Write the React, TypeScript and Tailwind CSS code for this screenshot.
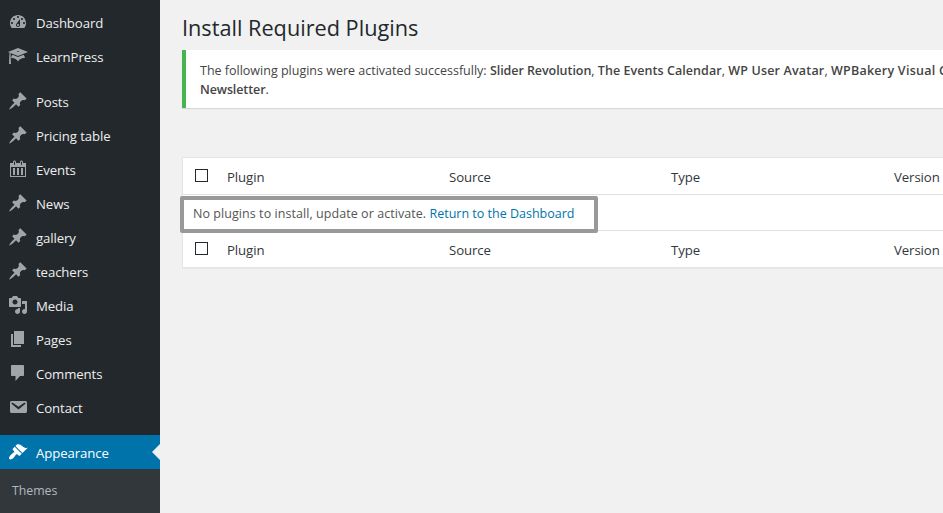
import type { ReactNode } from 'react';

const PIN =
  'M10.44 3.02l1.82-1.82 6.36 6.35-1.83 1.82c-1.05-.68-2.48-.57-3.41.36l-.75.75c-.92.93-1.04 2.35-.35 3.41l-1.83 1.82-2.41-2.41-2.8 2.79c-.42.42-3.38 2.71-3.8 2.29s1.86-3.39 2.28-3.81l2.79-2.79L4.1 9.36l1.83-1.82c1.05.69 2.48.57 3.4-.36l.75-.75c.93-.92 1.05-2.35.36-3.41z';
const DASHBOARD =
  'M3.76 16h12.48c1.1-1.37 1.76-3.11 1.76-5 0-4.42-3.58-8-8-8s-8 3.58-8 8c0 1.89.66 3.63 1.76 5zM10 4c.55 0 1 .45 1 1s-.45 1-1 1-1-.45-1-1 .45-1 1-1zM6 6c.55 0 1 .45 1 1s-.45 1-1 1-1-.45-1-1 .45-1 1-1zm8 0c.55 0 1 .45 1 1s-.45 1-1 1-1-.45-1-1 .45-1 1-1zm-5.37 5.55L12 7v6c0 1.1-.9 2-2 2s-2-.9-2-2c0-.57.24-1.08.63-1.45zM4 10c.55 0 1 .45 1 1s-.45 1-1 1-1-.45-1-1 .45-1 1-1zm12 0c.55 0 1 .45 1 1s-.45 1-1 1-1-.45-1-1 .45-1 1-1zm-5 3c0-.55-.45-1-1-1s-1 .45-1 1 .45 1 1 1 1-.45 1-1z';
const LEARN =
  'M10 10L2.54 7.02 3 18H1l.48-11.41L0 6l10-4 10 4zm0-5c-.55 0-1 .22-1 .5s.45.5 1 .5 1-.22 1-.5-.45-.5-1-.5zm0 6l5.57-2.23c.71.94 1.2 2.07 1.36 3.3-.3-.04-.61-.07-.93-.07-2.55 0-4.78 1.37-6 3.41C8.78 13.37 6.55 12 4 12c-.32 0-.63.03-.93.07.16-1.23.65-2.36 1.36-3.3z';
const CALENDAR =
  'M15 4h3v14H2V4h3V3c0-.83.67-1.5 1.5-1.5S8 2.17 8 3v1h4V3c0-.83.67-1.5 1.5-1.5S15 2.17 15 3v1zM6 3v2.5c0 .28.22.5.5.5s.5-.22.5-.5V3c0-.28-.22-.5-.5-.5S6 2.72 6 3zm7 0v2.5c0 .28.22.5.5.5s.5-.22.5-.5V3c0-.28-.22-.5-.5-.5s-.5.22-.5.5zm4 14V8H3v9h14zM7 16V9H5v7h2zm4 0V9H9v7h2zm4 0V9h-2v7h2z';
const MEDIA =
  'M13 11V4c0-.55-.45-1-1-1h-1.67L9 1H5L3.67 3H2c-.55 0-1 .45-1 1v7c0 .55.45 1 1 1h10c.55 0 1-.45 1-1zM7 4.5c1.38 0 2.5 1.12 2.5 2.5S8.38 9.5 7 9.5 4.5 8.38 4.5 7 5.62 4.5 7 4.5zM14 6h5v10.5c0 1.38-1.12 2.5-2.5 2.5S14 17.88 14 16.5s1.12-2.5 2.5-2.5c.17 0 .34.02.5.05V9h-3V6zm-4 8.05V13h2v3.5c0 1.38-1.12 2.5-2.5 2.5S7 17.88 7 16.5 8.12 14 9.5 14c.17 0 .34.02.5.05z';
const PAGES = 'M6 15V2h10v13H6zm-1 1h8v2H3V5h2v11z';
const COMMENTS =
  'M4 2h11c.55 0 1 .45 1 1v9c0 .55-.45 1-1 1h-3l-4.5 5v-5H4c-.55 0-1-.45-1-1V3c0-.55.45-1 1-1z';
const EMAIL =
  'M3.87 4h13.25C18.37 4 19 4.59 19 5.79v8.42c0 1.19-.63 1.79-1.88 1.79H3.87c-1.25 0-1.88-.6-1.88-1.79V5.79c0-1.2.63-1.79 1.88-1.79zm6.62 8.6l6.74-5.53c.24-.2.43-.66.13-1.07-.29-.41-.82-.42-1.17-.17l-5.7 3.86L4.8 5.83c-.35-.25-.88-.24-1.17.17-.3.41-.11.87.13 1.07z';
const BRUSH =
  'M14.48 11.06L7.41 3.99l1.5-1.5c.5-.56 2.3-.47 3.51.32 1.21.8 1.43 1.28 2.91 2.1 1.18.64 2.45 1.26 4.45.85zm-.71.71L6.7 4.7 4.93 6.47c-.39.39-.39 1.02 0 1.41l1.06 1.06c.39.39.39 1.03 0 1.42-.6.6-1.43 1.11-2.21 1.69-.35.26-.7.53-1.01.84C1.43 14.23.4 16.08 1.4 17.07c.99 1 2.84-.03 4.18-1.36.31-.31.58-.66.85-1.02.57-.78 1.08-1.61 1.69-2.21.39-.39 1.02-.39 1.41 0l1.06 1.06c.39.39 1.02.39 1.41 0z';

function MenuItem({ icon, active, children }: { icon: string; active?: boolean; children: ReactNode }) {
  return (
    <a
      className={`relative flex h-[34px] shrink-0 items-center pl-2 text-[13.2px] leading-[34px] tracking-[-0.1px] ${
        active ? 'bg-[#0073aa] text-white' : 'text-[#eeeeee]'
      }`}
    >
      <svg viewBox="0 0 20 20" className={`h-5 w-5 shrink-0 ${active ? 'fill-white' : 'fill-[#a0a5aa]'}`}>
        <path fillRule="evenodd" d={icon} />
      </svg>
      <span className="ml-2 whitespace-nowrap pt-[2px]">{children}</span>
      {active && (
        <span className="absolute right-0 top-[9px] h-0 w-0 border-y-8 border-r-8 border-y-transparent border-r-[#f1f1f1]" />
      )}
    </a>
  );
}

function HeadRow() {
  return (
    <div className="flex h-9 items-center text-[13.2px] tracking-[-0.08px] text-[#32373c]">
      <span className="ml-3 mb-px h-[13px] w-[13px] shrink-0 border border-[#23282d] bg-white" />
      <span className="ml-[19px] w-[222px] shrink-0 pt-1">Plugin</span>
      <span className="w-[222px] shrink-0 pt-1">Source</span>
      <span className="w-[223px] shrink-0 pt-1">Type</span>
      <span className="shrink-0 pt-1">Version</span>
    </div>
  );
}

export default function App() {
  return (
    <div className="flex h-[513px] w-[943px] overflow-hidden bg-[#f1f1f1] font-['Open_Sans','Noto_Sans',sans-serif]">
      <nav className="flex w-40 shrink-0 flex-col bg-[#23282d] pt-[5px]">
        <MenuItem icon={DASHBOARD}>Dashboard</MenuItem>
        <MenuItem icon={LEARN}>LearnPress</MenuItem>
        <div className="h-[11px] shrink-0" />
        <MenuItem icon={PIN}>Posts</MenuItem>
        <MenuItem icon={PIN}>Pricing table</MenuItem>
        <MenuItem icon={CALENDAR}>Events</MenuItem>
        <MenuItem icon={PIN}>News</MenuItem>
        <MenuItem icon={PIN}>gallery</MenuItem>
        <MenuItem icon={PIN}>teachers</MenuItem>
        <MenuItem icon={MEDIA}>Media</MenuItem>
        <MenuItem icon={PAGES}>Pages</MenuItem>
        <MenuItem icon={COMMENTS}>Comments</MenuItem>
        <MenuItem icon={EMAIL}>Contact</MenuItem>
        <div className="h-[11px] shrink-0" />
        <MenuItem icon={BRUSH} active>
          Appearance
        </MenuItem>
        <div className="flex-1 bg-[#32373c] pl-3 pt-[13px] text-[12.3px] leading-[18px] text-[#b4b9be]">Themes</div>
      </nav>

      <main className="flex min-w-0 flex-1 flex-col pl-[22px]">
        <h1 className="mt-[14px] h-9 shrink-0 whitespace-nowrap text-[21.7px] leading-7 text-[#23282d]">
          Install Required Plugins
        </h1>
        <div className="h-[58px] shrink-0 overflow-hidden whitespace-nowrap border-l-4 border-[#46b450] bg-white pl-[14px] pt-[11px] text-[12.5px] leading-[19px] text-[#444444] shadow-[0_1px_1px_rgba(0,0,0,0.1)] [&_strong]:font-semibold">
          <p>
            The following plugins were activated successfully:{' '}
            <strong className="tracking-[-0.06px]">Slider Revolution</strong>,{' '}
            <strong className="tracking-[0.06px]">The Events Calendar</strong>,{' '}
            <strong className="tracking-[0.18px]">WP User Avatar</strong>,{' '}
            <strong className="tracking-[0.25px]">WPBakery Visual C</strong>
          </p>
          <p>
            <strong className="tracking-[-0.1px]">Newsletter</strong>.
          </p>
        </div>

        <div className="relative mt-[49px] w-[900px] shrink-0 border border-[#e5e5e5] bg-white shadow-[0_1px_1px_rgba(0,0,0,0.04)]">
          <HeadRow />
          <div className="h-[37px] whitespace-nowrap border-y border-[#e1e1e1] pl-[10px] pt-[9px] text-[12.5px] leading-[19px] text-[#555555]">
            <span className="tracking-[0.06px]">No plugins to install, update or activate. </span>
            <a className="text-[#0073aa]">Return to the Dashboard</a>
          </div>
          <HeadRow />
          <div className="absolute -left-[3px] top-[38px] h-[37px] w-[418px] rounded-[2px] border-4 border-[#999999]" />
        </div>
      </main>
    </div>
  );
}
